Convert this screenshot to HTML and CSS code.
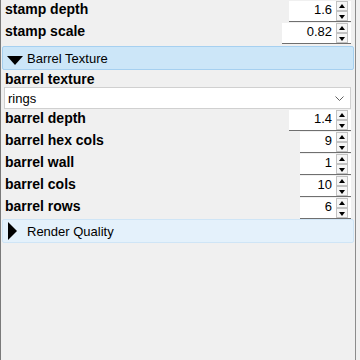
FILE: index.html
```html
<!DOCTYPE html>
<html lang="en">
<head>
  <meta charset="UTF-8">
  <meta name="viewport" content="width=device-width, initial-scale=1.0">
  <link rel="stylesheet" href="styles.css">
  <title>Settings</title>
</head>
<body>
  <div class="panel">
    <div class="row">
      <span class="label">stamp depth</span>
      <div class="spin w61"><span class="value">1.6</span><span class="arrows"><i class="up"></i><i class="down"></i></span></div>
    </div>
    <div class="row">
      <span class="label">stamp scale</span>
      <div class="spin w68"><span class="value">0.82</span><span class="arrows"><i class="up"></i><i class="down"></i></span></div>
    </div>

    <div class="group-header open">
      <span class="caret-down"></span>
      <span class="title">Barrel Texture</span>
    </div>

    <div class="field-label">barrel texture</div>
    <div class="combo">
      <span>rings</span>
      <svg width="9" height="5" viewBox="0 0 9 5"><polyline points="0.5,0.5 4.5,4.5 8.5,0.5" fill="none" stroke="#606060" stroke-width="1"/></svg>
    </div>

    <div class="row">
      <span class="label">barrel depth</span>
      <div class="spin w61"><span class="value">1.4</span><span class="arrows"><i class="up"></i><i class="down"></i></span></div>
    </div>
    <div class="row">
      <span class="label">barrel hex cols</span>
      <div class="spin w50"><span class="value">9</span><span class="arrows"><i class="up"></i><i class="down"></i></span></div>
    </div>
    <div class="row">
      <span class="label">barrel wall</span>
      <div class="spin w50"><span class="value">1</span><span class="arrows"><i class="up"></i><i class="down"></i></span></div>
    </div>
    <div class="row">
      <span class="label">barrel cols</span>
      <div class="spin w50"><span class="value">10</span><span class="arrows"><i class="up"></i><i class="down"></i></span></div>
    </div>
    <div class="row">
      <span class="label">barrel rows</span>
      <div class="spin w50"><span class="value">6</span><span class="arrows"><i class="up"></i><i class="down"></i></span></div>
    </div>

    <div class="group-header closed">
      <span class="caret-right"></span>
      <span class="title">Render Quality</span>
    </div>
  </div>
</body>
</html>
```

FILE: styles.css
```css
body {
  margin: 0;
  background-color: #f0f0f0;
  font-family: "Liberation Sans", Arial, sans-serif;
  color: #000;
}

.panel {
  width: 356px;
  height: 360px;
  box-sizing: border-box;
  border-left: 1px solid #7a7a7a;
  border-right: 1px solid #8c8c8c;
  overflow: hidden;
}

.row {
  display: flex;
  justify-content: space-between;
  align-items: flex-start;
  height: 22px;
  padding: 0 4px 0 4px;
}

.label,
.field-label {
  font-weight: bold;
  font-size: 14px;
  line-height: 18px;
}

.field-label {
  height: 17px;
  line-height: 17px;
  padding: 1px 0 0 4px;
  box-sizing: border-box;
}

/* spin box */
.spin {
  display: flex;
  height: 21px;
  margin-top: 1px;
  box-sizing: border-box;
  background-color: #fff;
  border-bottom: 1px solid #6f6f6f;
}

.w61 { width: 62px; }
.w68 { width: 69px; }
.w50 { width: 51px; }

.value {
  flex: 1;
  text-align: right;
  font-size: 13px;
  line-height: 17px;
  padding-right: 4px;
}

.arrows {
  display: flex;
  flex-direction: column;
  width: 12px;
  margin-right: 3px;
}

.arrows i {
  position: relative;
  display: block;
  height: 10px;
  box-sizing: border-box;
  border: 1px solid #c2c2c2;
  background-color: #f6f6f6;
}

.arrows i::after {
  content: "";
  position: absolute;
  left: 2px;
  width: 0;
  height: 0;
  border-left: 3px solid transparent;
  border-right: 3px solid transparent;
}

.arrows .up::after {
  top: 2px;
  border-bottom: 4px solid #000;
}

.arrows .down::after {
  top: 3px;
  border-top: 4px solid #000;
}

/* group headers */
.group-header {
  display: flex;
  align-items: center;
  height: 24px;
  margin: 0 1px;
  box-sizing: border-box;
  border: 1px solid;
  border-radius: 2px;
}

.group-header.open {
  margin-top: 2px;
  background-color: #cce6f8;
  border-color: #a6d0f0;
}

.group-header.closed {
  background-color: #e4f1fb;
  border-color: #cfe5f6;
}

.title {
  font-size: 13px;
  line-height: 20px;
  padding-top: 2px;
}

.caret-down {
  width: 0;
  height: 0;
  margin: 4px 4px 0 4px;
  border-left: 8px solid transparent;
  border-right: 8px solid transparent;
  border-top: 9px solid #000;
}

.caret-right {
  width: 0;
  height: 0;
  margin: 0 10px 0 5px;
  border-top: 9px solid transparent;
  border-bottom: 9px solid transparent;
  border-left: 9px solid #000;
}

/* combo box */
.combo {
  display: flex;
  justify-content: space-between;
  align-items: center;
  height: 22px;
  margin: 0 4px 0 3px;
  padding: 0 6px 0 3px;
  box-sizing: border-box;
  background-color: #fff;
  border: 1px solid #d0d0d0;
  font-size: 13px;
}
```
